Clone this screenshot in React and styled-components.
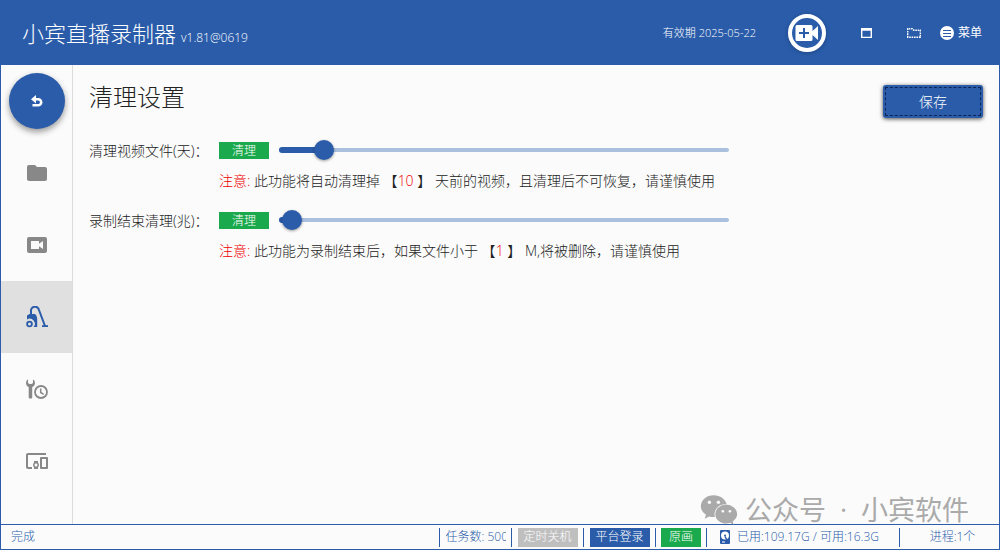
import React, { useState } from 'react'
import styled, { createGlobalStyle } from 'styled-components'
import { MdFolder, MdDevicesOther } from 'react-icons/md'
import { FaWeixin } from 'react-icons/fa'

const BLUE = '#2a5caa'
const GREEN = '#1aa94c'

const GlobalStyle = createGlobalStyle`
  * {
    box-sizing: border-box;
  }
  body {
    margin: 0;
    font-family: 'Open Sans', 'Noto Sans CJK SC', sans-serif;
    font-weight: 300;
    color: #222;
    background-color: #fbfbfb;
  }
  button {
    font-family: inherit;
    font-weight: inherit;
    padding: 0;
    border: none;
    cursor: pointer;
  }
`

const Window = styled.div`
  position: relative;
  display: flex;
  flex-direction: column;
  min-height: 100vh;
  border: 1px solid ${BLUE};
`

const Header = styled.header`
  display: flex;
  align-items: center;
  height: 64px;
  padding: 0 17px 0 21px;
  color: white;
  background-color: ${BLUE};
`

const Title = styled.h1`
  flex: 1;
  margin: 0;
  padding-top: 4px;
  font-size: 22px;
  line-height: 32px;
  font-weight: 300;
`

const Version = styled.small`
  margin-left: 5px;
  font-size: 12px;
`

const Expiry = styled.span`
  font-size: 11px;
  line-height: 16px;
`

const HeaderButton = styled.button`
  display: flex;
  align-items: center;
  gap: 4px;
  margin-left: ${({ $gap }) => $gap}px;
  color: white;
  font-size: 12px;
  font-weight: 400;
  line-height: 16px;
  background-color: transparent;
`

const RecordButton = styled(HeaderButton)`
  justify-content: center;
  width: 38px;
  height: 38px;
  border: 4px solid white;
  border-radius: 50%;
  box-shadow: 0 1px 4px rgba(0, 0, 0, 0.25);
`

const Body = styled.div`
  display: flex;
  flex: 1;
`

const Sidebar = styled.nav`
  display: flex;
  flex-direction: column;
  width: 72px;
  border-right: 1px solid #dcdcdc;
`

const BackButton = styled.button`
  display: flex;
  align-items: center;
  justify-content: center;
  width: 56px;
  height: 56px;
  margin: 8px;
  border-radius: 50%;
  color: white;
  background-color: ${BLUE};
  box-shadow: 0 3px 6px rgba(0, 0, 0, 0.4);
`

const NavButton = styled.button`
  display: flex;
  align-items: center;
  justify-content: center;
  height: 72px;
  color: ${({ $active }) => ($active ? BLUE : '#888')};
  background-color: ${({ $active }) => ($active ? '#e0e0e0' : 'transparent')};
`

const Main = styled.main`
  flex: 1;
  padding: 16px;
`

const PageHead = styled.div`
  display: flex;
  align-items: flex-start;
  justify-content: space-between;
  height: 60px;
`

const PageTitle = styled.h2`
  margin: 0;
  font-size: 24px;
  line-height: 32px;
  font-weight: 300;
`

const SaveButton = styled.button`
  width: 100px;
  height: 33px;
  margin-top: 4px;
  padding-bottom: 2px;
  border: 2px solid ${BLUE};
  border-radius: 3px;
  color: white;
  font-size: 14px;
  background-color: ${BLUE};
  outline: 1px dashed #0c2454;
  outline-offset: -3px;
  box-shadow: 0 1px 4px rgba(0, 0, 0, 0.7);
`

const Setting = styled.section`
  display: grid;
  grid-template-columns: 130px minmax(0, 510px);
  grid-template-rows: 20px 20px;
  row-gap: 10px;
  margin-bottom: 20px;
  font-size: 14px;
  line-height: 20px;
`

const SettingControl = styled.div`
  display: flex;
  align-items: center;
  gap: 10px;
  height: 18px;
`

const Tag = styled.button`
  width: ${({ $width }) => $width}px;
  height: ${({ $height }) => $height}px;
  color: white;
  font-size: 12px;
  line-height: 18px;
  background-color: ${({ $color }) => $color};
`

const Hint = styled.p`
  grid-column: 2;
  margin: 0;
  white-space: pre;
`

const Warn = styled.span`
  color: #e00;
`

const SliderBox = styled.div`
  display: grid;
  flex: 1;
  align-items: center;

  > * {
    grid-area: 1 / 1;
  }
`

const Track = styled.span`
  height: 4px;
  border-radius: 2px;
  background-color: #a9c0df;
`

const Fill = styled.span`
  height: 6px;
  border-radius: 3px;
  background-color: ${BLUE};
`

const Range = styled.input`
  appearance: none;
  width: calc(100% + 20px);
  height: 20px;
  margin: 0 -10px;
  background-color: transparent;

  &::-webkit-slider-thumb {
    appearance: none;
    width: 20px;
    height: 20px;
    border-radius: 50%;
    background-color: ${BLUE};
    box-shadow: 0 1px 3px rgba(0, 0, 0, 0.4);
  }
`

const StatusBar = styled.footer`
  display: flex;
  align-items: center;
  height: 25px;
  border-top: 1px solid ${BLUE};
  color: ${BLUE};
  font-size: 12px;
  line-height: 18px;
`

const StatusText = styled.span`
  flex: 1;
  padding-left: 10px;
`

const StatusCell = styled.div`
  display: flex;
  align-items: center;
  justify-content: center;
  gap: 7px;
  width: ${({ $width }) => $width}px;
  height: 19px;
  border-left: 1px solid ${BLUE};
`

const DiskCell = styled(StatusCell)`
  justify-content: flex-start;
  padding-left: 13px;
`

const ProcessCell = styled(StatusCell)`
  padding-left: 6px;
`

const TaskCount = styled.span`
  width: 60px;
  overflow: hidden;
  white-space: nowrap;
`

const Watermark = styled.div`
  position: absolute;
  right: 30px;
  bottom: 20px;
  display: flex;
  align-items: center;
  gap: 7px;
  color: #aaa;
  font-size: 27px;
  line-height: 38px;
  font-weight: 400;
  pointer-events: none;
`

const WatermarkText = styled.span`
  display: flex;
  gap: 14px;
`

const UndoIcon = () => (
  <svg width="12" height="13" viewBox="0 0 12 13" fill="none">
    <path d="M4 4.200h3.200a3 3 0 0 1 0 6H1.500" stroke="currentColor" strokeWidth="2.600" />
    <path d="M0 4.200 5 0v8.400z" fill="currentColor" />
  </svg>
)

const VideoPlusIcon = () => (
  <svg width="24" height="16" viewBox="0 0 24 16">
    <path
      fill="currentColor"
      fillRule="evenodd"
      d="M2 0h14a1.500 1.500 0 0 1 1.500 1.500V6L23 1v14L17.500 10v4.500A1.500 1.500 0 0 1 16 16H2A1.500 1.500 0 0 1 .5 14.500v-13A1.500 1.500 0 0 1 2 0zm6 3v4H4v2h4v4h2V9h4V7h-4V3z"
    />
  </svg>
)

const WindowIcon = () => (
  <svg width="11" height="10" viewBox="0 0 11 10">
    <path d="M0 0h11v10H0zM1.400 2.700v6h8.200v-6z" fill="currentColor" fillRule="evenodd" />
  </svg>
)

const DashedFolderIcon = () => (
  <svg width="14" height="10" viewBox="0 0 14 10" fill="none" stroke="currentColor">
    <path d="M.7 9.300V.7h4.500l1.500 1.500h6.600v7.100z" strokeWidth="1.400" strokeDasharray="1.600 .8" />
  </svg>
)

const MenuIcon = () => (
  <svg width="14" height="14" viewBox="0 0 14 14">
    <circle cx="7" cy="7" r="7" fill="currentColor" />
    <path d="M3 4.500h8M3 7.500h8M3 10.500h8" stroke={BLUE} />
  </svg>
)

const VideoBoxIcon = () => (
  <svg width="20" height="16" viewBox="0 0 20 16">
    <path
      fill="currentColor"
      fillRule="evenodd"
      d="M2 0h16a2 2 0 0 1 2 2v12a2 2 0 0 1-2 2H2a2 2 0 0 1-2-2V2a2 2 0 0 1 2-2zm2 4v8h8V9.200L16 12V4l-4 2.800V4z"
    />
  </svg>
)

const VacuumIcon = () => (
  <svg width="22" height="22" viewBox="0 0 22 22" fill="none">
    <path d="M5 10V5.500a4 4 0 0 1 8-1.500L19 20" stroke="currentColor" strokeWidth="2" />
    <path d="M16 19.200h6V21h-6z" fill="currentColor" />
    <path
      d="M1 9.500 3.500 8H9c1.500 1 2.200 3 2.200 5.500V21H7.500a5 5 0 0 0-6.500-7.500z"
      fill="currentColor"
    />
    <circle cx="3.500" cy="18" r="2.400" stroke="currentColor" strokeWidth="1.800" />
  </svg>
)

const ToolClockIcon = () => (
  <svg width="22" height="20" viewBox="0 0 22 20" fill="none">
    <path
      d="M2 .3A4.500 4.500 0 0 0 0 4c0 1.900 1.100 3.400 2.700 4.100V18.500a1 1 0 0 0 1 1H5.200a1 1 0 0 0 1-1V8.100C7.800 7.400 9 5.900 9 4A4.500 4.500 0 0 0 7 .3V4L5.500 5h-2L2 4z"
      fill="currentColor"
    />
    <circle cx="15" cy="13" r="6" stroke="currentColor" strokeWidth="1.800" />
    <path d="M14.700 9.500v4l3 1.800" stroke="currentColor" strokeWidth="1.500" />
  </svg>
)

const DiskIcon = () => (
  <svg width="10" height="14" viewBox="0 0 10 14">
    <rect width="10" height="14" rx="1" fill="currentColor" />
    <circle cx="5" cy="5.500" r="4" fill="white" />
    <circle cx="5" cy="5.500" r="1" fill="currentColor" />
    <path d="M5 6.500 7.500 11" stroke="currentColor" strokeWidth="1.500" />
    <path d="M2 12h3" stroke="white" />
  </svg>
)

const navItems = [
  { name: '文件', icon: <MdFolder size={24} /> },
  { name: '视频', icon: <VideoBoxIcon /> },
  { name: '清理', icon: <VacuumIcon /> },
  { name: '定时', icon: <ToolClockIcon /> },
  { name: '设备', icon: <MdDevicesOther size={24} /> },
]

function CleanSetting({ id, label, value, max, onChange, before, after }) {
  return (
    <Setting>
      <label htmlFor={id}>{label}</label>
      <SettingControl>
        <Tag $width={50} $height={17} $color={GREEN}>
          清理
        </Tag>
        <SliderBox>
          <Track />
          <Fill style={{ width: `${(value / max) * 100}%` }} />
          <Range
            id={id}
            type="range"
            min="0"
            max={max}
            value={value}
            onChange={(e) => onChange(Number(e.target.value))}
          />
        </SliderBox>
      </SettingControl>
      <Hint>
        <Warn>注意:</Warn> {before} 【<Warn>{value}</Warn> 】 {after}
      </Hint>
    </Setting>
  )
}

function App() {
  const [active, setActive] = useState(2)
  const [days, setDays] = useState(10)
  const [size, setSize] = useState(1)

  return (
    <Window>
      <GlobalStyle />
      <Header>
        <Title>
          小宾直播录制器
          <Version>v1.81@0619</Version>
        </Title>
        <Expiry>有效期 2025-05-22</Expiry>
        <RecordButton $gap={32} aria-label="添加录制">
          <VideoPlusIcon />
        </RecordButton>
        <HeaderButton $gap={35} aria-label="窗口">
          <WindowIcon />
        </HeaderButton>
        <HeaderButton $gap={35} aria-label="打开目录">
          <DashedFolderIcon />
        </HeaderButton>
        <HeaderButton $gap={19}>
          <MenuIcon />
          菜单
        </HeaderButton>
      </Header>

      <Body>
        <Sidebar>
          <BackButton aria-label="返回">
            <UndoIcon />
          </BackButton>
          {navItems.map((item, index) => (
            <NavButton
              key={item.name}
              aria-label={item.name}
              $active={index === active}
              onClick={() => setActive(index)}
            >
              {item.icon}
            </NavButton>
          ))}
        </Sidebar>

        <Main>
          <PageHead>
            <PageTitle>清理设置</PageTitle>
            <SaveButton>保存</SaveButton>
          </PageHead>
          <CleanSetting
            id="clean-days"
            label="清理视频文件(天)："
            value={days}
            max={100}
            onChange={setDays}
            before="此功能将自动清理掉"
            after="天前的视频，且清理后不可恢复，请谨慎使用"
          />
          <CleanSetting
            id="clean-size"
            label="录制结束清理(兆)："
            value={size}
            max={35}
            onChange={setSize}
            before="此功能为录制结束后，如果文件小于"
            after="M,将被删除，请谨慎使用"
          />
        </Main>
      </Body>

      <StatusBar>
        <StatusText>完成</StatusText>
        <StatusCell $width={72}>
          <TaskCount>任务数: 500</TaskCount>
        </StatusCell>
        <StatusCell $width={72}>
          <Tag $width={60} $height={19} $color="#bfbfbf">
            定时关机
          </Tag>
        </StatusCell>
        <StatusCell $width={72}>
          <Tag $width={60} $height={19} $color={BLUE}>
            平台登录
          </Tag>
        </StatusCell>
        <StatusCell $width={51}>
          <Tag $width={40} $height={19} $color={GREEN}>
            原画
          </Tag>
        </StatusCell>
        <DiskCell $width={193}>
          <DiskIcon />
          已用:109.17G / 可用:16.3G
        </DiskCell>
        <ProcessCell $width={100}>进程:1个</ProcessCell>
      </StatusBar>

      <Watermark>
        <FaWeixin size={38} />
        <WatermarkText>
          <span>公众号</span>
          <span>·</span>
          <span>小宾软件</span>
        </WatermarkText>
      </Watermark>
    </Window>
  )
}

export default App
